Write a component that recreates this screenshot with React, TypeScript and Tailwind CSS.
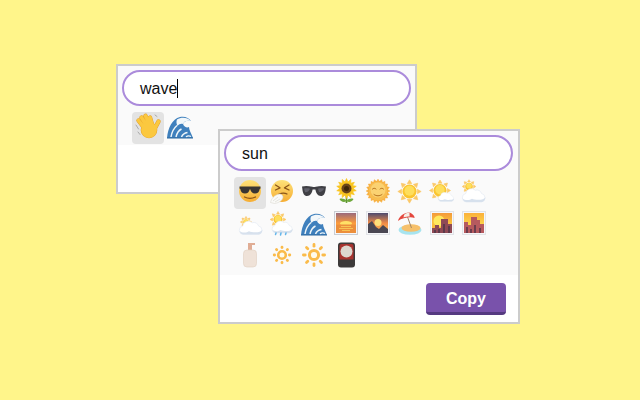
import React from 'react';

const Emoji: React.FC<{ children: React.ReactNode }> = ({ children }) => (
  <svg viewBox="0 0 32 32" className="w-8 h-8 block">{children}</svg>
);

const Rays: React.FC<{ cx?: number; cy?: number; n?: number; r1: number; r2: number; w: number; fill: string }> = ({ cx = 16, cy = 14, n = 8, r1, r2, w, fill }) => (
  <g>
    {Array.from({ length: n }).map((_, i) => (
      <path key={i} d={`M${cx - w} ${cy - r1}L${cx} ${cy - r2}L${cx + w} ${cy - r1}Z`} fill={fill} strokeLinejoin="round" stroke={fill} strokeWidth="0.6" transform={`rotate(${(i * 360) / n} ${cx} ${cy})`} />
    ))}
  </g>
);

const Dots: React.FC<{ r1: number; r2: number; w: number }> = ({ r1, r2, w }) => (
  <g>
    {Array.from({ length: 8 }).map((_, i) => (
      <line key={i} x1="16" y1={14 - r1} x2="16" y2={14 - r2} stroke="#fabb4a" strokeWidth={w} strokeLinecap="round" transform={`rotate(${i * 45} 16 14)`} />
    ))}
  </g>
);

const Cloud: React.FC<{ x?: number; y?: number; s?: number }> = ({ x = 0, y = 0, s = 1 }) => (
  <g transform={`translate(${x} ${y}) scale(${s})`}>
    <path d="M6 20a4.5 4.5 0 0 1-.6-8.9A6 6 0 0 1 15.5 7.6a5 5 0 0 1 6.5 3.4A4.6 4.6 0 0 1 22 20Z" fill="#ffffff" stroke="#e0e7f0" strokeWidth="0.6" />
    <path d="M2 16c1.5 1.5 3 2 5 2 2.500 0 3.500-1 5-1.500 2 1 6 1.500 9 1 2 0 4-1 5-2.500.3 2.500-1.500 5-4 5H6c-2 0-3.500-1.700-4-4Z" fill="#d7e1ed" />
  </g>
);

const Sunny: React.FC<{ cx: number; cy: number; r: number; ray: number; w: number }> = ({ cx, cy, r, ray, w }) => (
  <g>
    <Rays cx={cx} cy={cy} r1={r + 0.8} r2={r + ray} w={w} fill="#fbc868" />
    <circle cx={cx} cy={cy} r={r} fill="#fbc52f" />
    <circle cx={cx} cy={cy - 0.8} r={r * 0.72} fill="#fede5c" />
  </g>
);

const Face: React.FC<{ children: React.ReactNode }> = ({ children }) => (
  <g>
    <defs>
      <linearGradient id="face" x1="0" y1="0" x2="0" y2="1">
        <stop offset="0" stopColor="#fee27a" />
        <stop offset="1" stopColor="#f6ad32" />
      </linearGradient>
    </defs>
    <circle cx="16" cy="14" r="11" fill="url(#face)" />
    {children}
  </g>
);

const SunglassesFace = () => (
  <Emoji>
    <Face>
      <path d="M5.5 9.500h21v2l-.8.500c-.4 3-2.200 4.500-4.700 4.500-2.800 0-4-2-4.800-4.300h-.4C15 15 13.800 16.500 11 16.500 8.500 16.500 6.700 15 6.300 12l-.8-.500Z" fill="#3a3633" />
      <path d="M10.500 20c3.500 1.800 7.500 1.800 11 0" fill="none" stroke="#8a5518" strokeWidth="1.3" strokeLinecap="round" />
    </Face>
  </Emoji>
);

const SneezeFace = () => (
  <Emoji>
    <Face>
      <path d="M9.500 8l4.500 2.800L9.500 13M23 8l-4.500 2.800L23 13" fill="none" stroke="#8a5518" strokeWidth="1.3" strokeLinecap="round" strokeLinejoin="round" />
      <path d="M13 17c3-1.200 6-1.200 8 0" fill="none" stroke="#8a5518" strokeWidth="1.2" strokeLinecap="round" />
    </Face>
    <path d="M4.500 25.500c1-4 3.500-7.500 9-8.500 2 0 3.500 1.500 3.500 3 0 3-4 6-8.500 6.500Z" fill="#fafaf8" stroke="#d5d2c8" strokeWidth="0.5" />
    <path d="M7 24l5-4M9 25l5-3" stroke="#cfccc2" strokeWidth="0.5" />
  </Emoji>
);

const Glasses = () => (
  <Emoji>
    <path d="M4 9.500c3-.8 6-.8 10.300.3.900.4 2.500.4 3.400 0C22 8.700 25 8.700 28 9.500l-.3 2c-.4 5-2 7.500-4.700 7.500-3.500 0-5-3-5.600-6.500h-2.800C14 16 12.500 19 9 19c-2.700 0-4.300-2.500-4.700-7.500Z" fill="#3f3f44" />
    <path d="M6 11.500c2-.4 4-.4 6 .2-.5 2-3 4-5 3.500Z" fill="#60606a" />
    <path d="M20 11.700c2-.6 4-.6 6-.2-.2 1.500-3 4-5 3.500Z" fill="#60606a" />
  </Emoji>
);

const Sunflower = () => (
  <Emoji>
    <path d="M16.500 18v8" stroke="#5d9433" strokeWidth="1.6" />
    <path d="M16.500 24c-2-2.500-5-3-7-2 1 2.500 4.500 4 7 2ZM16.500 24c2-2.500 5-3 7-2-1 2.500-4.500 4-7 2Z" fill="#6fa83c" />
    <Rays cx={16.5} cy={11.5} n={14} r1={5} r2={10} w={2.2} fill="#f9c51f" />
    <circle cx="16.5" cy="11.5" r="5" fill="#6a4518" />
    <circle cx="16.5" cy="11.5" r="2.5" fill="#3d2609" />
  </Emoji>
);

const SunFace = () => (
  <Emoji>
    <Rays n={20} r1={9} r2={11.8} w={1.8} fill="#f7ae3c" />
    <circle cx="16" cy="14" r="9.5" fill="#f8bd50" />
    <circle cx="16" cy="13" r="7.5" fill="#fbd272" />
    <path d="M10.500 12c1-1 2.500-1 3.500 0M18 12c1-1 2.500-1 3.500 0" fill="none" stroke="#b5701c" strokeWidth="1" strokeLinecap="round" />
    <path d="M12 17.500c2.500 1.800 5.500 1.800 8 0" fill="none" stroke="#b5701c" strokeWidth="1" strokeLinecap="round" />
  </Emoji>
);

const Sun = () => (
  <Emoji>
    <Sunny cx={15.5} cy={14.5} r={7} ray={4.7} w={2.3} />
  </Emoji>
);

const SunSmallCloud = () => (
  <Emoji>
    <Sunny cx={14} cy={13.5} r={6.5} ray={4} w={2} />
    <Cloud x={11} y={11.4} s={0.65} />
  </Emoji>
);

const SunCloud = () => (
  <Emoji>
    <Sunny cx={11} cy={9.5} r={3.8} ray={3} w={1.4} />
    <Cloud x={2.6} y={6} s={0.95} />
  </Emoji>
);

const CloudSmallSun = () => (
  <Emoji>
    <Sunny cx={12} cy={13} r={2.8} ray={2.8} w={1.2} />
    <Cloud x={3.6} y={6.5} s={0.95} />
  </Emoji>
);

const SunRain = () => (
  <Emoji>
    <Sunny cx={12} cy={10.5} r={4.5} ray={3.5} w={1.5} />
    <Cloud x={4.5} y={7} s={0.85} />
    <path d="M10 24l-.5 1.500M15 24l-.5 2M20 24l-.5 1.500" stroke="#62b5ea" strokeWidth="1.5" strokeLinecap="round" />
  </Emoji>
);

const Wave = () => (
  <Emoji>
    <path d="M3 26C4 16 8 7 16 5c5-1 9 1 11 4-4-1-7 0-8 3 1 3 4 4 6 3 0 3 2 6 4 11Z" fill="#3f80bd" />
    <path d="M13 7.500c4-2.500 10-2.500 14 1.500-4-1-7 0-8 3-2-.5-4 0-5.500 2-1-2-1.500-4.500-.5-6.500Z" fill="#f2f7fa" />
    <path d="M7 25c.8-5 3-9 6-11.500M12 25c.8-3.500 2.500-6.500 5.500-8M17.500 25c1-2.500 3-4 6-4.500" fill="none" stroke="#eef5f9" strokeWidth="1.5" />
    <path d="M22 25c1-1 3-1.500 5-.5" fill="none" stroke="#eef5f9" strokeWidth="1.2" />
    <path d="M3 25.500h26v1H3Z" fill="#2b669f" />
  </Emoji>
);

const Tile: React.FC<{ id: string; top: string; mid: string; bottom: string; edge?: string; children: React.ReactNode }> = ({ id, top, mid, bottom, edge = '#e2e4e8', children }) => (
  <Emoji>
    <defs>
      <linearGradient id={id} x1="0" y1="0" x2="0" y2="1">
        <stop offset="0" stopColor={top} />
        <stop offset="0.5" stopColor={mid} />
        <stop offset="1" stopColor={bottom} />
      </linearGradient>
    </defs>
    <rect x="4.5" y="2.5" width="23" height="23" fill="#f6f6f8" stroke={edge} strokeWidth="1" />
    <rect x="6" y="4" width="20" height="20" fill={`url(#${id})`} />
    {children}
  </Emoji>
);

const Sunrise = () => (
  <Tile id="sr" top="#9a6a7c" mid="#fb9a3c" bottom="#fdc94a" edge="#c9cdd3">
    <ellipse cx="16" cy="14.5" rx="6" ry="2.5" fill="#ffe066" />
    <rect x="6" y="15.5" width="20" height="8.5" fill="#ec8f3c" />
    <path d="M11 17.500h10M9 19.500h14M12 21.500h8" stroke="#f9c957" strokeWidth="0.9" />
  </Tile>
);

const Mountains = () => (
  <Tile id="mt" top="#4d4a6e" mid="#f08a46" bottom="#ffc45a">
    <circle cx="16" cy="13.5" r="3.5" fill="#fde07a" />
    <path d="M6 24v-9l4-3 4 6 3 2 4-4 5 4v4Z" fill="#4a4752" />
  </Tile>
);

const Beach = () => (
  <Emoji>
    <ellipse cx="16" cy="21" rx="11.5" ry="4.8" fill="#a7e4ef" />
    <ellipse cx="17" cy="19" rx="9.5" ry="3.8" fill="#f6c06a" />
    <path d="M13 6.500l4.500 12.500" stroke="#a58866" strokeWidth="1" />
    <path d="M4 12c1-5 7-9 11.500-8.500 3.500 1 5.500 4.500 5 5.500-3.500-1.500-12-.5-16.500 3Z" fill="#e4473d" />
    <path d="M10 6c1-1.300 3.500-2.500 5.500-2.500 0 1.500 0 3 .2 4-2 0-4.500.3-6.200 1Z" fill="#f5efe6" />
  </Emoji>
);

const CityDusk = () => (
  <Tile id="cd" top="#f39a3a" mid="#fbc13e" bottom="#f7b23e">
    <circle cx="13" cy="12" r="5.5" fill="#ffe85f" />
    <path d="M6 24v-5h3v-3h4v3h2V10h7v5h4v9Z" fill="#8f4a55" />
    <path d="M8 24v-3h2v3ZM12 24v-4h2v4ZM17 24v-9h2v9ZM22 24v-7h2v7Z" fill="#5c3a4a" />
  </Tile>
);

const CitySunset = () => (
  <Tile id="cs" top="#fbb03a" mid="#fbd048" bottom="#f9de55">
    <path d="M6 24V13h4v3h3V8h6v3h3v4h4v9Z" fill="#b65a5e" />
    <path d="M8 24v-6h2v6ZM12 24v-4h2v4ZM16 24v-8h2v8ZM21 24v-5h2v5Z" fill="#6b3d4e" />
  </Tile>
);

const Lotion = () => (
  <Emoji>
    <path d="M14 2h7v2h-3v5h-4Z" fill="#e0ad95" />
    <rect x="9.5" y="9" width="13" height="17" rx="3.5" fill="#efe2d8" stroke="#e3d2c6" strokeWidth="0.7" />
  </Emoji>
);

const Dim = () => (
  <Emoji>
    <Dots r1={7.4} r2={7.8} w={2.8} />
    <circle cx="16" cy="14" r="3.8" fill="#fffbea" stroke="#fabb4a" strokeWidth="2.6" />
  </Emoji>
);

const Bright = () => (
  <Emoji>
    <Dots r1={8.8} r2={10.6} w={2.8} />
    <circle cx="16" cy="14" r="4.6" fill="#fffbea" stroke="#fabb4a" strokeWidth="3" />
  </Emoji>
);

const Hanafuda = () => (
  <Emoji>
    <rect x="8" y="1.5" width="17" height="25" rx="3" fill="#3c3a3a" />
    <path d="M9.500 18.500V5c0-1.200.8-2 2-2h10c1.200 0 2 .8 2 2v13.500Z" fill="#a7332f" />
    <circle cx="16.5" cy="10.5" r="6" fill="#ddd7cf" />
  </Emoji>
);

const fingers = 'M13 17L6.500 8.500M15.500 15L9.500 5.500M18 14L13.500 3.800M20.500 14L18 5.500M22 18L26.500 9.500';

const Hand = () => (
  <Emoji>
    <path d={fingers} stroke="#e29d2a" strokeWidth="4.4" strokeLinecap="round" fill="none" />
    <circle cx="17" cy="18" r="8.3" fill="#e29d2a" />
    <path d={fingers} stroke="#fbc83f" strokeWidth="3.6" strokeLinecap="round" fill="none" />
    <circle cx="17" cy="18" r="7.9" fill="#fbc83f" />
    <path d="M4 13l2.500 4M6 20l2 2.500M23 3l2 1.500" stroke="#9a9a9a" strokeWidth="0.8" strokeLinecap="round" />
  </Emoji>
);

const Cell: React.FC<{ active?: boolean; children: React.ReactNode }> = ({ active, children }) => (
  <div className={`w-8 h-8 rounded ${active ? 'bg-[#e3e3e3]' : ''}`}>{children}</div>
);

const sunEmoji = [SunglassesFace, SneezeFace, Glasses, Sunflower, SunFace, Sun, SunSmallCloud, SunCloud, CloudSmallSun, SunRain, Wave, Sunrise, Mountains, Beach, CityDusk, CitySunset, Lotion, Dim, Bright, Hanafuda];

const App: React.FC = () => {
  return (
    <div className="relative w-[640px] h-[400px] overflow-hidden bg-[#fff58a] font-['Liberation_Sans',sans-serif] text-[#111]">
      <div className="absolute left-[116px] top-[64px] w-[301px] h-[130px] bg-white border-2 border-[#cccccc]">
        <div className="bg-[#fafafa] h-[79px] pt-1 px-1">
          <div className="flex items-center h-[36px] w-[289px] rounded-full bg-white border-2 border-[#ab8bdb] pl-4 pt-px text-base">
            wave<span className="w-px h-[19px] bg-black"></span>
          </div>
          <div className="flex pl-[10px] pt-[6px]">
            <Cell active><Hand /></Cell>
            <Cell><Wave /></Cell>
          </div>
        </div>
      </div>

      <div className="absolute left-[218px] top-[129px] w-[302px] h-[195px] bg-white border-2 border-[#cccccc]">
        <div className="bg-[#fafafa] h-[144px] pt-1 px-1">
          <div className="flex items-center h-[36px] w-[289px] rounded-full bg-white border-2 border-[#ab8bdb] pl-4 pt-px text-base">
            sun
          </div>
          <div className="flex flex-wrap w-[256px] ml-[10px] mt-[6px]">
            {sunEmoji.map((E, i) => (
              <Cell key={i} active={i === 0}><E /></Cell>
            ))}
          </div>
        </div>
        <div className="flex justify-end pt-2 pr-3">
          <button className="w-20 h-8 pt-[2px] rounded bg-[#7952ab] border-b-[3px] border-[#553a80] text-white text-base font-bold">Copy</button>
        </div>
      </div>
    </div>
  );
};

export default App;
